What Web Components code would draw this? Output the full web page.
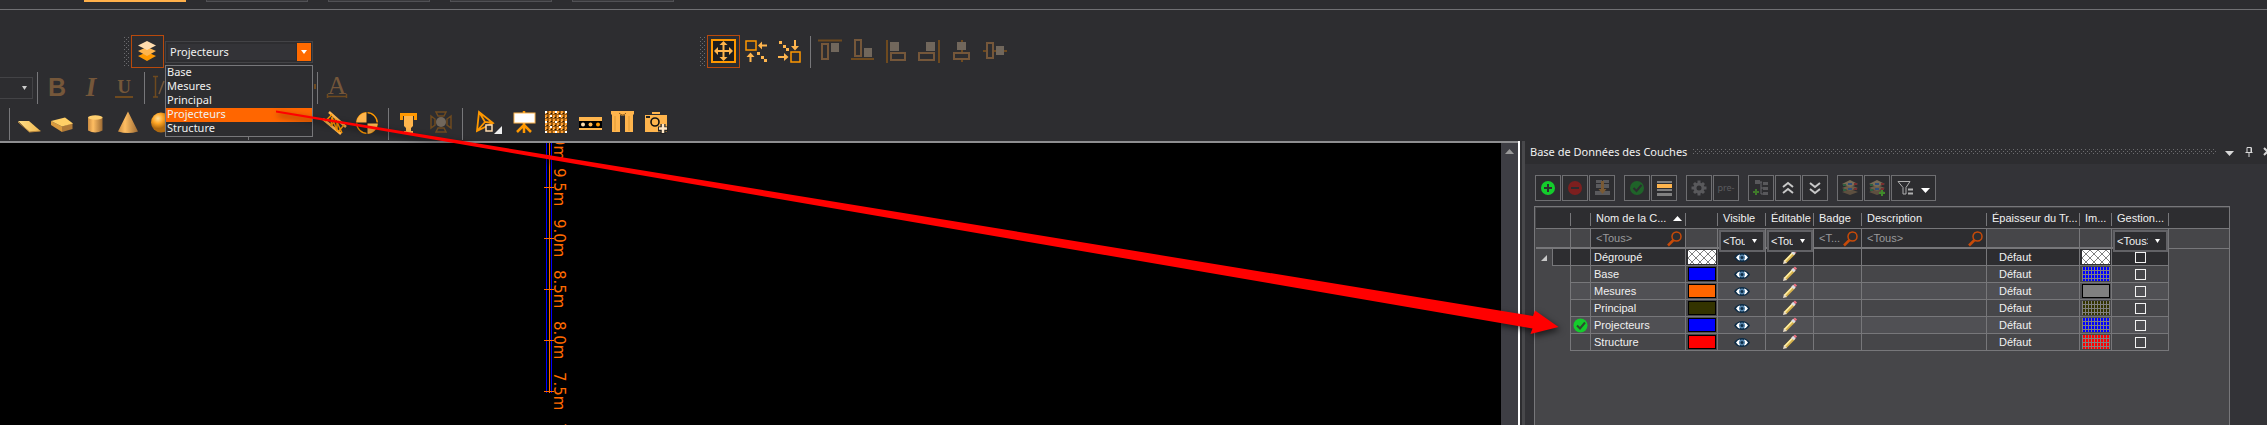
<!DOCTYPE html>
<html lang="fr">
<head>
<meta charset="utf-8">
<title>Base de Données des Couches</title>
<style>
  html, body { margin: 0; height: 100%; background: #2d2d30; overflow: hidden; }
  body { font: 11px/14px "Noto Sans", "Open Sans", sans-serif; color: #f1f1f1;
    --dots: conic-gradient(from 270deg at 1px 1px, #6c6c6f 90deg, transparent 0) 0 0/4px 4px, conic-gradient(from 270deg at 1px 1px, #6c6c6f 90deg, transparent 0) 2px 2px/4px 4px; }
</style>
</head>
<body>
<cad-app></cad-app>
<script>
const O = '#ff9800', L = '#ffb54d', D = '#6e4a1f', R = '#75573a', F = '#71675c';
const SERIF = 'font-family="Liberation Serif, serif"', SANS = 'font-family="Liberation Sans, sans-serif"';
const dots = (pts, c) => pts.map(([x, y]) => `<rect x="${x - 1}" y="${y - 1}" width="3" height="3" fill="${c}"/>`).join('');
const stack = `<path d="M12 13l8 3-8 3-8-3z" fill="#5e5040"/><path d="M12 9l8 3-8 3-8-3z" fill="#6d5f4a"/><path d="M12 4l8 4-8 3-8-3z" fill="#7a6c56"/>
  <path d="M5 9h3M5 14h3" stroke="#2f6040" stroke-width="2"/><path d="M10 8h4M10 13h4" stroke="#2f4f7a" stroke-width="2"/><path d="M16 8h3M16 13h3" stroke="#7a2f2f" stroke-width="2"/>`;
const ICONS = {
  layers: `<path d="M12 13l9 4-9 5-9-5z" fill="${O}"/><path d="M12 8l9 4-9 5-9-5z" fill="${L}"/><path d="M12 2l9 4.500-9 4.500-9-4.500z" fill="#ffdcae"/>`,
  move: `<rect x="1" y="1" width="23" height="22" fill="#1c1c1e" stroke="${O}" stroke-width="2"/><path d="M4 12h17M12.500 4v16" stroke="${L}" stroke-width="2"/><path d="M12.500 2l4 4h-8zM12.500 22l4-4h-8zM3 12l4-4v8zM22 12l-4-4v8z" fill="${L}"/>`,
  gather: `<rect x="2" y="2" width="10" height="9" fill="none" stroke="${O}" stroke-width="1.500"/><path d="M16 6.500h7M6.500 16v7" stroke="${L}" stroke-width="2"/><path d="M14 6.500l4-4v8zM6.500 13.500l4 4.500h-8z" fill="${L}"/>${dots([[14, 14], [18, 18], [21, 21]], L)}`,
  spread: `<rect x="14" y="13" width="9" height="10" fill="none" stroke="${O}" stroke-width="1.500"/><path d="M18 1v7M1 18h7" stroke="${L}" stroke-width="2"/><path d="M18 11.500l4-4.500h-8zM11.500 18l-4.500-4v8z" fill="${L}"/>${dots([[3, 3], [7, 7], [10, 10]], L)}`,
  alTop: `<path d="M0 1.500h24" stroke="${D}" stroke-width="2"/><rect x="4" y="5" width="6" height="15" fill="none" stroke="${R}" stroke-width="2"/><path d="M13 4h8v9h-8z" fill="${F}"/>`,
  alBottom: `<path d="M0 20h23" stroke="${D}" stroke-width="2"/><rect x="4" y="1" width="6" height="16" fill="none" stroke="${R}" stroke-width="2"/><path d="M13 9h8v9h-8z" fill="${F}"/>`,
  alLeft: `<path d="M3 1v23" stroke="${D}" stroke-width="2"/><rect x="7" y="14" width="14" height="7" fill="none" stroke="${R}" stroke-width="2"/><path d="M6 3h9v9H6z" fill="${F}"/>`,
  alRight: `<path d="M22 1v23" stroke="${D}" stroke-width="2"/><rect x="2" y="14" width="15" height="7" fill="none" stroke="${R}" stroke-width="2"/><path d="M9 3h9v9H9z" fill="${F}"/>`,
  alMidV: `<path d="M12 1v22" stroke="${D}" stroke-width="2"/><rect x="4" y="14" width="15" height="6" fill="#2d2d30" stroke="${R}" stroke-width="2"/><path d="M7 3h9v8H7z" fill="${F}"/>`,
  alMidH: `<path d="M0 12h24" stroke="${D}" stroke-width="2"/><rect x="4" y="4" width="6" height="15" fill="#2d2d30" stroke="${R}" stroke-width="2"/><path d="M13 7h8v9h-8z" fill="${F}"/>`,
  bold: `<text x="12" y="21" text-anchor="middle" ${SANS} font-size="25" font-weight="700" fill="${R}">B</text>`,
  italic: `<text x="13" y="21" text-anchor="middle" ${SERIF} font-size="27" font-style="italic" font-weight="700" fill="${R}">I</text>`,
  underline: `<text x="13" y="18" text-anchor="middle" ${SERIF} font-size="19" font-weight="700" fill="${R}">U</text><path d="M4 22h18" stroke="${D}" stroke-width="2"/>`,
  height: `<path d="M3.500 2v20M1 1.500h5M1 22h5" stroke="${D}" stroke-width="1.500" fill="none"/><path d="M7 19l5-13" stroke="${R}" stroke-width="1.500"/>`,
  tail: `<path d="M31 9v5" stroke="${D}" stroke-width="2"/>`,
  charA: `<text x="12" y="19" text-anchor="middle" ${SERIF} font-size="26" fill="${R}">A</text><path d="M2 21.500h20M2.500 19v4M21.500 19v4" stroke="${D}" stroke-width="1.500"/>`,
  plane: `<path d="M1 10l11 0 11.500 10-11 1z" fill="url(#g)"/><path d="M1 11l11.500 10 11-1" stroke="#b8863c" fill="none"/>`,
  box: `<path d="M1 10v4l11 7v-5.500z" fill="#d99a3e"/><path d="M12 15.500v5.500l10.500-3v-6z" fill="#b07a38"/><path d="M1 10l14-3.500 8 6-11 3z" fill="#ffcf66"/>`,
  cylinder: `<path d="M5 6.500v13q7 4 14.500 0v-13z" fill="url(#h)"/><ellipse cx="12.300" cy="6.500" rx="7.300" ry="2.200" fill="#ffd070"/>`,
  cone: `<path d="M12 .5l10 20q-10 3-20 0z" fill="url(#h)"/>`,
  sphere: `<circle cx="12" cy="11.500" r="10" fill="url(#s)"/>`,
  truss: `<path d="M7 1l17 15M1 8l18 15" stroke="${L}" stroke-width="2.500"/><path d="M10 3.500l-7 7M9 15l1-9 5 14 0-9 5 11M22 14l-6 7M14 8l-5 7" stroke="${O}" stroke-width="1.500" fill="none"/>`,
  ball: `<circle cx="12" cy="12" r="10.300" fill="#222224" stroke="${O}" stroke-width="1.300"/><path d="M12 12V1.500A10.500 10.500 0 0 0 1.500 12zM12 12v10.500A10.500 10.500 0 0 0 22.500 12z" fill="${L}"/><path d="M12 1v22M1 12h22" stroke="#222"/>`,
  clamp: `<path d="M5.500 9V3.500h14V9" fill="none" stroke="${O}" stroke-width="3"/><path d="M8 5h9v10l-2 2v3h2v2H8v-2h2v-3l-2-2z" fill="${L}"/>`,
  spot: `<circle cx="12" cy="11" r="5" fill="${F}"/><path d="M7 1h10l-2 4H9zM7 21h10l-2-4H9zM2 5l4 3v6l-4 3zM22 5l-4 3v6l4 3z" fill="none" stroke="${D}" stroke-width="1.500"/>`,
  cursor: `<path d="M9 1l14 11-16 8zM9 1l6 10 8 1M15 11l-8 9" fill="none" stroke="${O}" stroke-width="1.800"/><rect x="16" y="14" width="6" height="6" fill="#333" stroke="#ffdcae" stroke-width="1.500"/><path d="M32 15v8h-8z" fill="#eee"/>`,
  screen: `<path d="M14 12v10M14 14l-7 7M14 14l7 7M14 0v2" stroke="${O}" stroke-width="2.500"/><rect x="4" y="2" width="21" height="10" fill="#fff" stroke="${L}"/>`,
  led: `<rect x="2" y="0" width="22" height="22" fill="#9a5a10"/><rect x="2" y="0" width="22" height="22" fill="url(#p)"/>${[[2, 0], [12, 0], [22, 0], [7, 4], [16, 4], [2, 10], [12, 10], [22, 10], [7, 15], [16, 15], [2, 20], [12, 20], [22, 20]].map(([x, y]) => `<rect x="${x}" y="${y}" width="2" height="2" fill="#fff"/>`).join('')}`,
  deck: `<path d="M3 6h23v4H3z" fill="${L}"/><path d="M3 10h23v7H3z" fill="#000"/><path d="M3 17h23v2H3z" fill="${L}"/><circle cx="7" cy="13.500" r="2" fill="#ffdcae"/><circle cx="14.500" cy="13.500" r="2" fill="${L}"/><circle cx="22" cy="13.500" r="2" fill="${O}"/>`,
  curtain: `<path d="M2 0h23v3l-1 1v17h-8V4q-2 1-5 0v17H3V4L2 3z" fill="${L}"/><path d="M10 2q4 4 7 0" stroke="#8a5a1a" fill="none"/><path d="M6 5v15M20 5v15" stroke="#e09a35"/>`,
  camera: `<path d="M3 4h7v-3h8v3h7v17H3z" fill="${L}"/><path d="M3 3.500h22" stroke="#2d2d30"/><circle cx="13" cy="11" r="4" fill="${L}" stroke="#111" stroke-width="1.600"/><path d="M4 6h4" stroke="#222" stroke-width="2"/><path d="M21 13v10M16 18h10" stroke="#222" stroke-width="5"/><path d="M21 13v9M17 17.500h8" stroke="#ffe6c4" stroke-width="2.500"/>`,
  add: `<circle cx="12" cy="12" r="7" fill="#14cc2c"/><path d="M12 8v8M8 12h8" stroke="#2d2d30" stroke-width="2"/>`,
  remove: `<circle cx="12" cy="12" r="7" fill="#7d1f1f"/><path d="M8 12h8" stroke="#2d2d30" stroke-width="2"/>`,
  purge: `<path d="M6 4h6v3H6zM13 4h6v3h-6zM6 8h6v4H6zM13 8h6v4h-6zM5 15h15v4H5z" fill="#5a5a5d"/><path d="M12.500 5v10" stroke="#7a5a34" stroke-width="3"/><path d="M8.500 13h8l-4 5z" fill="#7a5a34"/>`,
  active: `<circle cx="12" cy="12" r="7" fill="#1f6329"/><path d="M8.500 12l3 3 5-6" stroke="#2d2d30" stroke-width="2" fill="none"/>`,
  rows: `<path d="M5 5h15v2H5zM5 13h15v2H5zM5 17h15v3H5z" fill="#808080"/><path d="M5 8h15v4H5z" fill="${L}"/>`,
  gear: `<circle cx="12" cy="12" r="4" fill="none" stroke="#59595c" stroke-width="3"/><path d="M12 4.500v3M12 16.500v3M4.500 12h3M16.500 12h3M7 7l2 2M15 15l2 2M17 7l-2 2M9 15l-2 2" stroke="#59595c" stroke-width="3"/>`,
  tree: `<path d="M6 4h5v4H6zM14 6h5v3h-5zM14 11h5v3h-5zM14 16h5v3h-5z" fill="#58585b"/><path d="M11 6h2M12 6v12M12 12h2M12 18h2" stroke="#66666a" fill="none"/><path d="M7 13v6M4 16h6" stroke="#3f7a2a" stroke-width="2"/>`,
  up: `<path d="M7 11l5-4 5 4M7 17l5-4 5 4" stroke="#c8c8c8" stroke-width="2" fill="none"/>`,
  down: `<path d="M7 7l5 4 5-4M7 13l5 4 5-4" stroke="#c8c8c8" stroke-width="2" fill="none"/>`,
  stack,
  stackAdd: stack + `<path d="M17 14v6M14 17h6" stroke="#3f8a2a" stroke-width="2"/>`,
  filter: `<path d="M6 5.500h12l-4 6v6.500h-3v-6.500z" fill="none" stroke="#b0b0b0"/><path d="M16 13.500h5M16 17.500h5" stroke="#b0b0b0" stroke-width="2"/><path d="M29 12h9l-4.500 5z" fill="#fff"/>`,
  search: `<circle cx="9.500" cy="5.500" r="4.500" fill="none" stroke="#c84a08" stroke-width="1.500"/><path d="M6.500 9l-5.500 5.500" stroke="#c84a08" stroke-width="2.500"/>`,
  eye: `<path d="M0 5.500Q3 1 8 1t8 4.500Q13 10 8 10T0 5.500z" fill="#0d2c47"/><path d="M2 5.500q2-3 4-3v6q-2 0-4-3zM14 5.500q-2-3-4-3v6q2 0 4-3z" fill="#fff"/><circle cx="8" cy="5.500" r="3" fill="#5585ad"/><circle cx="8" cy="5.500" r="1.500" fill="#0d2c47"/>`,
  pencil: `<path d="M2 12l9-9" stroke="#d6b24c" stroke-width="3.500"/><path d="M1.500 11.500L10.500 2" stroke="#fff0a8" stroke-width="1.500"/><path d="M9.500 4l2-2" stroke="#dcdce4" stroke-width="3.500"/><path d="M11.500 2l1.500-1.500" stroke="#f07080" stroke-width="3"/><path d="M0 14l1-4 3 3z" fill="#e8dcc8"/>`,
  check: `<circle cx="7.500" cy="7.500" r="7" fill="#14cc2c"/><path d="M4 7.500l3 3 5-6" stroke="#2d4a30" stroke-width="2" fill="none"/>`
};
const SIZES = { eye: [16, 11], pencil: [14, 14], search: [15, 15], check: [15, 14], cursor: [32, 25], filter: [43, 24] };
const DEFS = `<defs><linearGradient id="g"><stop offset="0" stop-color="#ffe08a"/><stop offset="1" stop-color="#f0b850"/></linearGradient>
<linearGradient id="h"><stop offset="0" stop-color="#c98a40"/><stop offset=".35" stop-color="#ffbe62"/><stop offset="1" stop-color="#9c6a34"/></linearGradient>
<radialGradient id="s" cx=".35" cy=".3"><stop offset="0" stop-color="#ffdf9a"/><stop offset=".5" stop-color="#ffa726"/><stop offset="1" stop-color="#b06a10"/></radialGradient>
<pattern id="p" width="4" height="4" patternUnits="userSpaceOnUse"><path d="M2 0h2v2H2z" fill="#ffa030"/><path d="M0 2h1v1H0z" fill="#221505"/><path d="M2 2h1v1h-1z" fill="#ffc070"/></pattern></defs>`;

const define = (name, render) => customElements.define(name, class extends HTMLElement {
  constructor() { super(); this.attachShadow({ mode: 'open' }); }
  connectedCallback() { this.shadowRoot.innerHTML = render(this); }
});

define('app-icon', el => {
  const n = el.getAttribute('name');
  const [w, h] = SIZES[n] || (el.hasAttribute('panel') ? [24, 24] : [25, 25]);
  return `<style>:host{display:block;flex:none}svg{display:block;overflow:visible}</style>
  <svg width="${w}" height="${h}" viewBox="0 0 ${w} ${h}" aria-hidden="true">${DEFS}${ICONS[n] || ''}</svg>`;
});

define('tool-button', el => `<style>
  :host{display:block;flex:none}
  button{box-sizing:border-box;display:flex;align-items:center;justify-content:center;width:33px;height:33px;margin:0;padding:0;border:1px solid transparent;background:none}
  :host([wide]) button{width:40px}
  :host([active]) button{border-color:#b8490c}
</style><button type="button" aria-label="${el.getAttribute('icon')}"><app-icon name="${el.getAttribute('icon')}"></app-icon></button>`);

define('tool-grip', () => `<style>:host{display:block;flex:none;width:5px;height:30px;margin-right:2px;background:var(--dots)}</style>`);

define('tool-sep', () => `<style>:host{display:block;flex:none;width:1px;height:32px;margin:0 3px 0 4px;background:#77777a}</style>`);

define('document-tabs', () => `<style>
  :host{display:flex;gap:20px;height:9px;padding-left:84px;border-bottom:1px solid #707073}
  i{box-sizing:border-box;height:2px;width:102px;background:#3a3a3d;border:solid #515155;border-width:0 1px 1px}
  i.on{background:#ffb04a;border:0}
</style><i class="on"></i><i></i><i></i><i></i><i></i>`);

define('layer-combo', () => `<style>
  :host{display:block;position:relative;flex:none;width:148px;margin-left:1px;z-index:2}
  .field{box-sizing:border-box;display:flex;height:22px;border:1px solid #434346;padding:1px}
  select{appearance:none;flex:1;min-width:0;margin:1px;padding:0 0 1px 2px;border:0;background:#333337;color:#f1f1f1;font:inherit;line-height:15px;outline:0}
  .arrow{display:flex;align-items:center;justify-content:center;width:14px;background:#ff6a00}
  ul{position:absolute;top:24px;left:0;right:0;margin:0;padding:0;list-style:none;border:1px solid #77777a;background:#2d2d30}
  li{height:14px;line-height:12px;padding-left:1px}
  li.on{background:#ff6600}
</style>
<div class="field"><select aria-label="Couche active"><option>Projecteurs</option></select>
<span class="arrow"><svg width="6" height="4"><path d="M0 0h6l-3 4z" fill="#fff"/></svg></span></div>
<ul role="listbox" aria-label="Couches"><li>Base</li><li>Mesures</li><li>Principal</li><li class="on">Projecteurs</li><li>Structure</li></ul>`);

const tools = s => s.split(' ').map(n => n === '|' ? '<tool-sep></tool-sep>' : `<tool-button icon="${n}"${n === 'cursor' ? ' wide' : ''}${n === 'move' || n === 'layers' ? ' active' : ''}></tool-button>`).join('');
define('tool-rows', () => `<style>
  :host{display:flex;flex-direction:column;gap:3px;padding:25px 0 1px}
  div{display:flex;align-items:center;height:33px}
  .r1{padding-left:124px}.r3{padding-left:5px}
  .align{margin-left:387px;display:flex;align-items:center}
  select{appearance:none;box-sizing:border-box;width:34px;height:22px;margin:0 0 0 -1px;padding:0;border:1px solid #434346;background:#2d2d30}
  .font{position:relative}
  .font svg{position:absolute;right:6px;top:15px}
</style>
<div class="r1"><tool-grip></tool-grip>${tools('layers')}<layer-combo></layer-combo>
<div class="align"><tool-grip></tool-grip>${tools('move gather spread | alTop alBottom alLeft alRight alMidV alMidH')}</div></div>
<div><div class="font"><select aria-label="Taille"></select><svg width="5" height="4"><path d="M0 0h5l-2.500 4z" fill="#ccc"/></svg></div>${tools('| bold italic underline | height blank blank blank tail | charA')}</div>
<div class="r3">${tools('| plane box cylinder cone sphere blank blank | blank blank truss ball | clamp spot | cursor screen led deck curtain camera')}</div>`);

define('height-ruler', () => `<style>
  :host{display:block;width:24px;height:100%;color:#ff6a00;font:15px/16px "DejaVu Sans",sans-serif;
    background:linear-gradient(90deg,transparent 2px,#0000ff 2px 3px,transparent 3px 5px,#ff6a00 5px 6px,transparent 6px 7px,#0000ff 7px 8px,transparent 8px)}
  .scale{margin-top:-32px}
  .mark{display:flex;align-items:center;height:51px}
  .tick{width:10px;height:1px;background:#ff6a00}
  .label{writing-mode:vertical-rl;margin-left:-3px;white-space:nowrap}
</style><div class="scale">${['10.0m', '9.5m', '9.0m', '8.5m', '8.0m', '7.5m', '7.0m'].map(t => `<div class="mark"><span class="tick"></span><span class="label">${t}</span></div>`).join('')}</div>`);

define('drawing-view', () => `<style>
  :host{display:flex;flex:1;min-width:0;overflow:hidden}
  .frame{flex:1;display:flex;border-top:2px solid #8e8e90;background:#000;overflow:hidden}
  .canvas{flex:1;padding-left:544px;overflow:hidden}
  .bar{width:17px;background:#3e3e44;padding-top:6px;display:flex;justify-content:center}
  .edge{width:2px;background:#fff}
</style><div class="frame"><div class="canvas"><height-ruler></height-ruler></div><div class="bar"><svg width="9" height="5"><path d="M0 5h9L4.500 0z" fill="#999"/></svg></div></div><div class="edge"></div>`);

const COLS = [17, 18, 20, 95, 32, 48, 48, 48, 125, 93, 32, 57];
const ROWS = [['Base', '#0000ff'], ['Mesures', '#ff6600'], ['Principal', '#333300'], ['Projecteurs', '#0000ff'], ['Structure', '#ff0000']];
const hatch = `<svg class="cross" width="28" height="14"><defs><pattern id="x" width="8" height="8" patternUnits="userSpaceOnUse"><path d="M0 0l8 8M8 0L0 8" stroke="#808080"/></pattern></defs><rect width="28" height="14" fill="#fff"/><rect width="28" height="14" fill="url(#x)"/></svg>`;
const tail = (n, print) => `<td><app-icon name="eye"></app-icon></td><td><app-icon name="pencil"></app-icon></td><td></td><td></td><td class="def">Défaut</td><td>${print}</td><td><input type="checkbox" aria-label="Gestion ${n}"></td><td class="rest"></td>`;
function find(v) { return `<td class="find"><div class="box"><input aria-label="Filtre" value="${v.replace('<', '&lt;')}"><app-icon name="search"></app-icon></div></td>`; }
function pick() { return `<td><div class="pick"><select aria-label="Filtre"><option>&lt;Tous&gt;</option></select><svg width="5" height="4"><path d="M0 0h5l-2.500 4z" fill="#fff"/></svg></div></td>`; }
define('layer-table', () => `<style>
  :host{display:block;flex:1;margin:5px 37px 0 9px;padding:1px 0 0 1px;border:solid #77777a;border-width:1px 1px 0;background:#464649;
    font:11px/14px "Liberation Sans",Arial,sans-serif}
  table{width:100%;table-layout:fixed;border-collapse:separate;border-spacing:0}
  th,td{box-sizing:border-box;padding:0;font-weight:400;text-align:left;white-space:nowrap;border:solid #77777a;border-width:0 1px 1px 0}
  th{height:21px;padding-left:5px;background:linear-gradient(#77777a,#77777a) right 5px/1px 13px no-repeat #2d2d30;border-right:0;overflow:hidden}
  th.rest{background:#2d2d30}
  th span{display:flex;align-items:center;justify-content:space-between;padding-right:4px}
  tr.filter td{height:20px;border-bottom-width:2px}
  td.find{background:#2d2d30}
  .box{display:flex;align-items:center;padding:0 3px 0 5px}
  .box input{flex:1;width:0;min-width:0;margin:0;padding:0;border:0;background:none;color:#9a9a9c;font:inherit;outline:0}
  .pick{position:relative;z-index:1;display:flex;align-items:center;box-sizing:border-box;height:22px;margin:1px 0 -5px 1px;padding:0 6px 0 2px;background:#2d2d30;border:2px solid #626266}
  .pick select{appearance:none;flex:1;width:0;min-width:0;margin:0;padding:0;border:0;background:none;color:#f1f1f1;font:11px/16px "Liberation Sans",Arial,sans-serif;text-overflow:clip;overflow:hidden}
  .pick svg{margin-left:7px}
  .data td{height:17px}
  .data app-icon{width:max-content;margin:0 auto}
  td.name{padding-left:3px} td.def{padding-left:12px}
  td.rest{border:0}
  .filter td.rest{border:solid #77777a;border-width:0 0 1px}
  tr.group td:not(:first-child):not(.rest){background:#2d2d30}
  tr.group td:first-child,tr.child td:first-child{border-bottom:0}
  tr.alt td:not(:first-child):not(.rest){background:#505054}
  .cross{display:block;margin:0 auto}
  .sw{display:block;box-sizing:border-box;width:28px;height:14px;margin:0 auto;border:1px solid #000}
  .mesh{border:0;background:linear-gradient(#808080 1px,transparent 1px) 0 3px/4px 4px,linear-gradient(90deg,#808080 1px,transparent 1px) 3px 0/3px 4px,var(--c)}
  input[type=checkbox]{appearance:none;display:block;box-sizing:border-box;width:11px;height:11px;margin:0 auto;border:1px solid #f1f1f1}
</style>
<table><colgroup>${COLS.map(w => `<col style="width:${w}px">`).join('')}<col></colgroup>
<thead><tr><th colspan="2"></th><th></th><th><span>Nom de la C...<svg width="9" height="5"><path d="M0 5h9L4.500 0z" fill="#fff"/></svg></span></th><th></th><th>Visible</th><th>Éditable</th><th>Badge</th><th>Description</th><th>Épaisseur du Tr...</th><th>Im...</th><th>Gestion...</th><th class="rest"></th></tr></thead>
<tbody><tr class="filter"><td colspan="2"></td><td></td>${find('<Tous>')}<td></td>${pick()}${pick()}${find('<T...')}${find('<Tous>')}<td></td><td></td>${pick()}<td class="rest"></td></tr></tbody>
<tbody class="data">
<tr class="group"><td><svg width="16" height="6" style="display:block"><path d="M11 0v6H5z" fill="#c8c8c8"/></svg></td><td></td><td></td><td class="name">Dégroupé</td><td>${hatch}</td>${tail('Dégroupé', hatch)}</tr>
${ROWS.map(([n, c], i) => `<tr class="child${i % 2 ? ' alt' : ''}"><td colspan="2"></td><td>${n === 'Projecteurs' ? '<app-icon name="check"></app-icon>' : ''}</td><td class="name">${n}</td><td><span class="sw" style="background:${c}"></span></td>${tail(n, n === 'Mesures' ? '<span class="sw" style="background:#808080"></span>' : `<span class="sw mesh" style="--c:${c}"></span>`)}</tr>`).join('')}
</tbody></table>`);

define('panel-tools', () => `<style>
  :host{display:flex;gap:9px;padding:11px 0 0 10px}
  div{display:flex;gap:1px}
  button{box-sizing:border-box;display:flex;align-items:center;justify-content:center;width:26px;height:26px;margin:0;padding:0;border:1px solid #6e6e71;background:#2d2d30;color:#5c5c5f;font:9px/12px "Noto Sans",sans-serif;overflow:hidden}
  button.wide{width:45px}
</style>${[['add', 'remove', 'purge'], ['active', 'rows'], ['gear', 'pre-'], ['tree', 'up', 'down'], ['stack', 'stackAdd', 'filter']].map(g =>
  `<div>${g.map(n => `<button type="button" aria-label="${n}"${n === 'filter' ? ' class="wide"' : ''}>${n === 'pre-' ? n : `<app-icon panel name="${n}"></app-icon>`}</button>`).join('')}</div>`).join('')}`);

define('dock-panel', () => `<style>
  :host{box-sizing:border-box;display:flex;flex-direction:column;flex:none;width:747px;border-left:2px solid #2d2d30;background:#333337;box-shadow:inset 3px 0 #48484b;padding-left:3px}
  header{display:flex;align-items:center;box-sizing:border-box;height:23px;padding:0 0 2px 5px;background:#2d2d30;white-space:nowrap;overflow:hidden}
  .dots{flex:1;height:6px;margin:1px 8px 0 6px;background:var(--dots)}
  header svg{flex:none}
</style>
<header>Base de Données des Couches<span class="dots"></span><svg width="42" height="12" aria-hidden="true"><path d="M0 5h9l-4.500 5z" fill="#d8d8d8"/><path d="M22 1.500h4v5h-4zM20.500 6.500h7M24 7v4M26.500 1.500v5" stroke="#d8d8d8" fill="none"/><path d="M39 2l7 7M46 2l-7 7" stroke="#d8d8d8" stroke-width="2"/></svg></header>
<panel-tools></panel-tools><layer-table></layer-table>`);

define('pointer-arrow', () => `<style>:host{position:absolute;top:0;left:0;z-index:5;pointer-events:none}svg{display:block;filter:drop-shadow(2px 3px 3px rgba(0,0,0,.6))}</style>
<svg width="1570" height="345" aria-hidden="true"><path d="M276 110.500L1533 316l2-5.500 23.500 16.500-28 7 2-5.500L276 112.500z" fill="#ff0000"/></svg>`);

define('cad-app', () => `<style>
  :host{position:relative;display:flex;flex-direction:column;height:100vh;overflow:hidden}
  main{flex:1;display:flex;min-height:0;overflow:hidden}
</style><document-tabs></document-tabs><tool-rows></tool-rows><main><drawing-view></drawing-view><dock-panel></dock-panel></main><pointer-arrow></pointer-arrow>`);
</script>
</body>
</html>
